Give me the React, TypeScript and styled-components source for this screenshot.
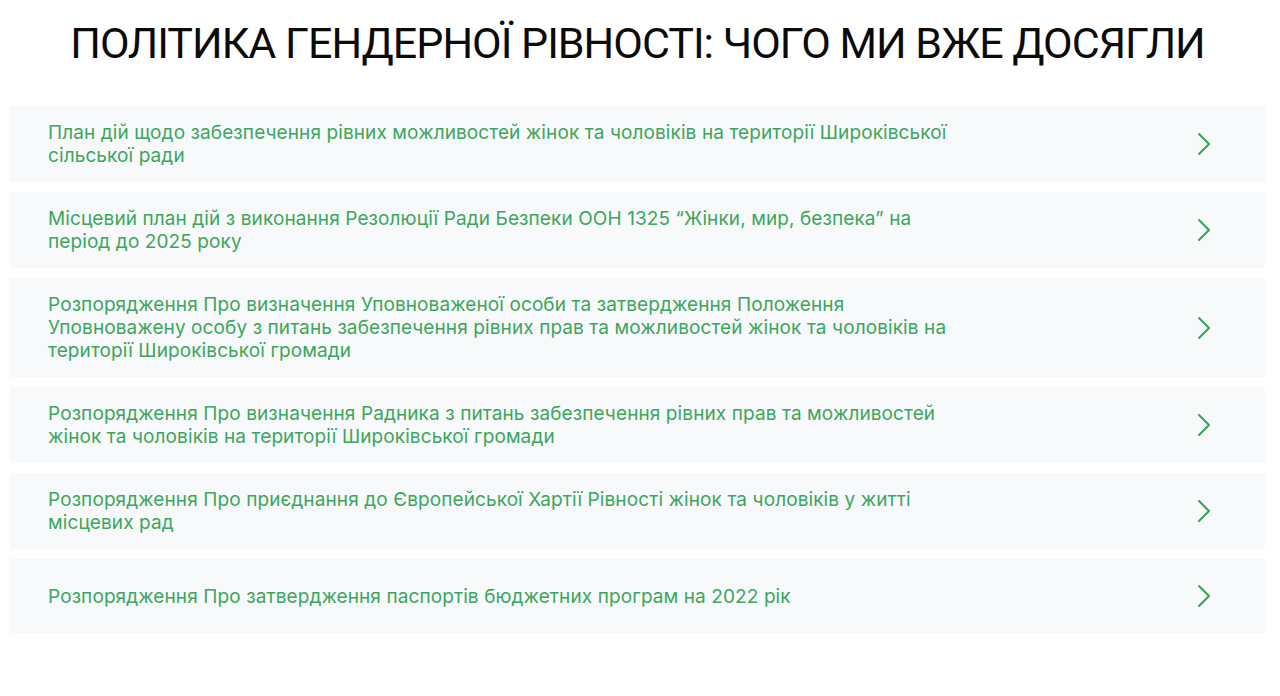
import React from "react";
import styled, { createGlobalStyle } from "styled-components";

const Global = createGlobalStyle`
  html, body { margin: 0; padding: 0; background: #ffffff; }
  body { font-family: Inter, "Noto Sans", sans-serif; }
`;

const Page = styled.main`
  padding: 0 15px 0 10px;
`;

const Title = styled.h1`
  margin: 0;
  padding: 18px 0 38px;
  text-align: center;
  font-family: Roboto, "Noto Sans", sans-serif;
  font-weight: 400;
  font-size: 43px;
  line-height: 50px;
  letter-spacing: -1px;
  color: #0b0b0b;
`;

const List = styled.ul`
  list-style: none;
  margin: 0;
  padding: 0;
  display: flex;
  flex-direction: column;
  gap: 10px;
`;

const Item = styled.li`
  display: flex;
  align-items: center;
  justify-content: space-between;
  min-height: 74px;
  box-sizing: border-box;
  padding: 15px 54px 15px 38px;
  background: #f7f9fb;
`;

const Label = styled.a`
  max-width: 910px;
  font-size: 19px;
  line-height: 23px;
  letter-spacing: 0.1px;
  color: #3ba65c;
  text-decoration: none;
`;

const Chevron = () => (
  <svg width="14" height="24" viewBox="0 0 14 24" fill="none">
    <path d="M2 2 L12 12 L2 22" stroke="#32a453" strokeWidth="2" strokeLinecap="round" strokeLinejoin="round" />
  </svg>
);

const items = [
  "План дій щодо забезпечення рівних можливостей жінок та чоловіків на території Широківської сільської ради",
  "Місцевий план дій з виконання Резолюції Ради Безпеки ООН 1325 “Жінки, мир, безпека” на період до 2025 року",
  "Розпорядження Про визначення Уповноваженої особи та затвердження Положення Уповноважену особу з питань забезпечення рівних прав та можливостей жінок та чоловіків на території Широківської громади",
  "Розпорядження Про визначення Радника з питань забезпечення рівних прав та можливостей жінок та чоловіків на території Широківської громади",
  "Розпорядження Про приєднання до Європейської Хартії Рівності жінок та чоловіків у житті місцевих рад",
  "Розпорядження Про затвердження паспортів бюджетних програм на 2022 рік",
];

export default function App() {
  return (
    <Page>
      <Global />
      <Title>ПОЛІТИКА ГЕНДЕРНОЇ РІВНОСТІ: ЧОГО МИ ВЖЕ ДОСЯГЛИ</Title>
      <List>
        {items.map((t) => (
          <Item key={t}>
            <Label href="#">{t}</Label>
            <Chevron />
          </Item>
        ))}
      </List>
    </Page>
  );
}
